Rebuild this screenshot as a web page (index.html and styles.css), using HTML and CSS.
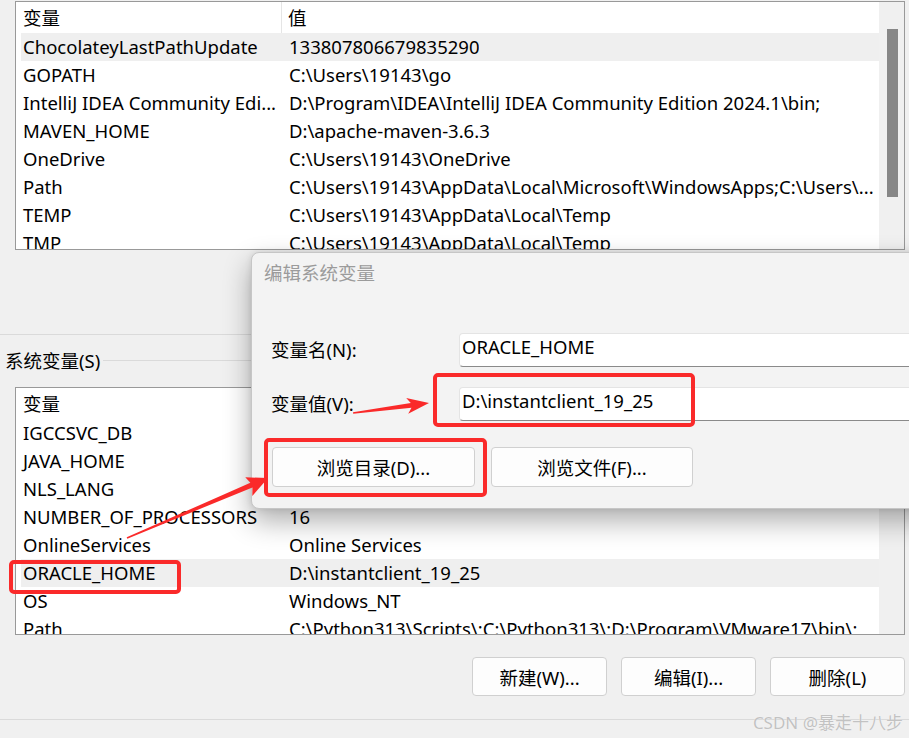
FILE: index.html
```html
<!DOCTYPE html>
<html lang="zh-CN">

<head>
    <meta charset="UTF-8">
    <meta name="viewport" content="width=device-width, initial-scale=1.0">
    <title>环境变量</title>
    <link rel="stylesheet" href="styles.css">
</head>

<body>
    <div class="window">
        <!-- 用户变量 -->
        <div class="group group-user">
            <div class="list list-top">
                <div class="list-main">
                    <div class="list-head">
                        <div class="cell-name">变量</div>
                        <div class="cell-value">值</div>
                    </div>
                    <div class="row sel">
                        <div class="cell-name">ChocolateyLastPathUpdate</div>
                        <div class="cell-value">133807806679835290</div>
                    </div>
                    <div class="row">
                        <div class="cell-name">GOPATH</div>
                        <div class="cell-value">C:\Users\19143\go</div>
                    </div>
                    <div class="row">
                        <div class="cell-name">IntelliJ IDEA Community Edi...</div>
                        <div class="cell-value">D:\Program\IDEA\IntelliJ IDEA Community Edition 2024.1\bin;</div>
                    </div>
                    <div class="row">
                        <div class="cell-name">MAVEN_HOME</div>
                        <div class="cell-value">D:\apache-maven-3.6.3</div>
                    </div>
                    <div class="row">
                        <div class="cell-name">OneDrive</div>
                        <div class="cell-value">C:\Users\19143\OneDrive</div>
                    </div>
                    <div class="row">
                        <div class="cell-name">Path</div>
                        <div class="cell-value">C:\Users\19143\AppData\Local\Microsoft\WindowsApps;C:\Users\...</div>
                    </div>
                    <div class="row">
                        <div class="cell-name">TEMP</div>
                        <div class="cell-value">C:\Users\19143\AppData\Local\Temp</div>
                    </div>
                    <div class="row">
                        <div class="cell-name">TMP</div>
                        <div class="cell-value">C:\Users\19143\AppData\Local\Temp</div>
                    </div>
                </div>
                <div class="vscroll">
                    <div class="thumb"></div>
                </div>
            </div>
            <div class="actions">
                <button class="btn">新建(N)...</button>
                <button class="btn">编辑(E)...</button>
                <button class="btn">删除(D)</button>
            </div>
        </div>

        <!-- 系统变量 -->
        <div class="group group-system">
            <div class="group-title">系统变量(S)</div>
            <div class="list list-bottom">
                <div class="list-main">
                    <div class="list-head">
                        <div class="cell-name">变量</div>
                        <div class="cell-value">值</div>
                    </div>
                    <div class="row">
                        <div class="cell-name">IGCCSVC_DB</div>
                        <div class="cell-value">AQAAANCMnd8BFdERjHoAwE/Cl+sBAAAA</div>
                    </div>
                    <div class="row">
                        <div class="cell-name">JAVA_HOME</div>
                        <div class="cell-value">D:\Java\jdk-17</div>
                    </div>
                    <div class="row">
                        <div class="cell-name">NLS_LANG</div>
                        <div class="cell-value">SIMPLIFIED CHINESE_CHINA.ZHS16GBK</div>
                    </div>
                    <div class="row">
                        <div class="cell-name">NUMBER_OF_PROCESSORS</div>
                        <div class="cell-value">16</div>
                    </div>
                    <div class="row">
                        <div class="cell-name">OnlineServices</div>
                        <div class="cell-value">Online Services</div>
                    </div>
                    <div class="row sel">
                        <div class="cell-name">ORACLE_HOME</div>
                        <div class="cell-value">D:\instantclient_19_25</div>
                    </div>
                    <div class="row">
                        <div class="cell-name">OS</div>
                        <div class="cell-value">Windows_NT</div>
                    </div>
                    <div class="row">
                        <div class="cell-name">Path</div>
                        <div class="cell-value">C:\Python313\Scripts\;C:\Python313\;D:\Program\VMware17\bin\;</div>
                    </div>
                </div>
                <div class="vscroll"></div>
            </div>
            <div class="actions">
                <button class="btn">新建(W)...</button>
                <button class="btn">编辑(I)...</button>
                <button class="btn">删除(L)</button>
            </div>
        </div>
    </div>

    <!-- 编辑系统变量 对话框 -->
    <div class="dialog">
        <div class="dialog-title">编辑系统变量</div>
        <div class="dialog-form">
            <label class="field-label">变量名(N):</label>
            <div class="field">ORACLE_HOME</div>
            <label class="field-label">变量值(V):</label>
            <div class="field">D:\instantclient_19_25</div>
        </div>
        <div class="dialog-actions">
            <button class="btn">浏览目录(D)...</button>
            <button class="btn">浏览文件(F)...</button>
        </div>
    </div>

    <!-- 标注 -->
    <div class="mark mark-value"></div>
    <div class="mark mark-browse"></div>
    <div class="mark mark-row"></div>
    <svg class="arrows" width="909" height="738" viewBox="0 0 909 738">
        <polygon points="353,412.2 353.2,413.8 411.5,407.8 408.2,413.8 429,403 406.2,398 410.8,402.9" />
        <polygon points="126.7,537.3 127.3,538.7 252.4,487.4 252.3,495.9 268,478 245.3,477.3 250.4,482.8" />
    </svg>

    <div class="watermark">CSDN @暴走十八步</div>
</body>

</html>
```

FILE: styles.css
```css
html,
body {
    margin: 0;
    height: 100%;
    overflow: hidden;
}

body {
    position: relative;
    background: #f0f0f0;
    font-family: "Noto Sans", "Noto Sans CJK SC", sans-serif;
    font-size: 18.5px;
    color: #000;
}

button {
    font: inherit;
    color: inherit;
}

.group {
    padding: 0 4px 23px 0;
    border-bottom: 1px solid #dadada;
}

.group-user {
    padding-top: 1px;
}

.group-title {
    display: flex;
    align-items: center;
    height: 28px;
    margin: 11px 0 13px;
    padding-left: 5px;
    white-space: nowrap;
}

.group-title::after {
    content: "";
    flex: 1;
    margin-left: 3px;
    border-top: 1px solid #dadada;
}

.list {
    display: flex;
    height: 249px;
    margin-left: 15px;
    box-sizing: border-box;
    border: 1px solid #999;
    background: #fff;
    overflow: hidden;
}

.list-bottom {
    height: 248px;
}

.list-main {
    flex: 1;
    overflow: hidden;
}

.list-head {
    display: flex;
    height: 31px;
    line-height: 32px;
    margin-left: 5px;
}

.list-head .cell-name {
    border-right: 1px solid #e5e5e5;
}

.list-head .cell-value {
    padding-left: 6px;
}

.row {
    display: flex;
    height: 28px;
    line-height: 28px;
    margin-left: 5px;
    white-space: nowrap;
}

.row.sel {
    background: #efefef;
}

.cell-name {
    width: 261px;
    flex-shrink: 0;
    box-sizing: border-box;
    padding-left: 2px;
    white-space: nowrap;
    overflow: hidden;
}

.cell-value {
    padding-left: 7px;
    white-space: nowrap;
    overflow: hidden;
}

.vscroll {
    width: 25px;
    flex-shrink: 0;
    background: #f0f0f0;
}

.thumb {
    width: 11px;
    height: 168px;
    margin: 27px 0 0 8px;
    background: #878787;
}

.actions {
    display: flex;
    justify-content: flex-end;
    gap: 14px;
    margin-top: 22px;
}

.btn {
    width: 135px;
    height: 39px;
    padding: 0;
    border: 1px solid #d0d0d0;
    border-radius: 4px;
    background: #fdfdfd;
}

/* dialog */
.dialog {
    position: absolute;
    left: 251px;
    top: 252px;
    width: 720px;
    height: 257px;
    box-sizing: border-box;
    border: 1px solid #c6c6c6;
    border-radius: 8px;
    background: #f3f3f3;
    box-shadow: 0 12px 28px rgba(0, 0, 0, 0.32), 0 0 6px rgba(0, 0, 0, 0.1);
}

.dialog-title {
    height: 42px;
    line-height: 40px;
    padding-left: 12px;
    color: #9b9b9b;
}

.dialog-form {
    display: grid;
    grid-template-columns: 188px 1fr;
    grid-auto-rows: 34px;
    row-gap: 20px;
    align-items: center;
    padding: 38px 0 0 19px;
}

.field-label {
    line-height: 32px;
}

.field {
    height: 34px;
    line-height: 26px;
    box-sizing: border-box;
    padding-left: 2px;
    border: 1px solid #e4e4e4;
    border-bottom-color: #8a8a8a;
    border-radius: 4px 0 0 4px;
    background: #fff;
    white-space: nowrap;
}

.dialog-actions {
    display: flex;
    gap: 16px;
    padding: 26px 0 0 20px;
}

.dialog-actions .btn {
    width: 203px;
    height: 40px;
}

.dialog-actions .btn + .btn {
    width: 202px;
}

/* annotations */
.mark {
    position: absolute;
    box-sizing: border-box;
    border: 4px solid #fa2a2a;
    border-radius: 5px;
}

.mark-value {
    left: 433px;
    top: 373px;
    width: 262px;
    height: 54px;
}

.mark-browse {
    left: 264px;
    top: 438px;
    width: 223px;
    height: 59px;
}

.mark-row {
    left: 9px;
    top: 560px;
    width: 172px;
    height: 34px;
}

.arrows {
    position: absolute;
    left: 0;
    top: 0;
    pointer-events: none;
}

.arrows polygon {
    fill: #fa2a2a;
}

.watermark {
    position: absolute;
    right: 6px;
    top: 709px;
    font-size: 17px;
    color: #c2c2c2;
    text-shadow: 0 0 1px #fff;
    white-space: nowrap;
}
```
